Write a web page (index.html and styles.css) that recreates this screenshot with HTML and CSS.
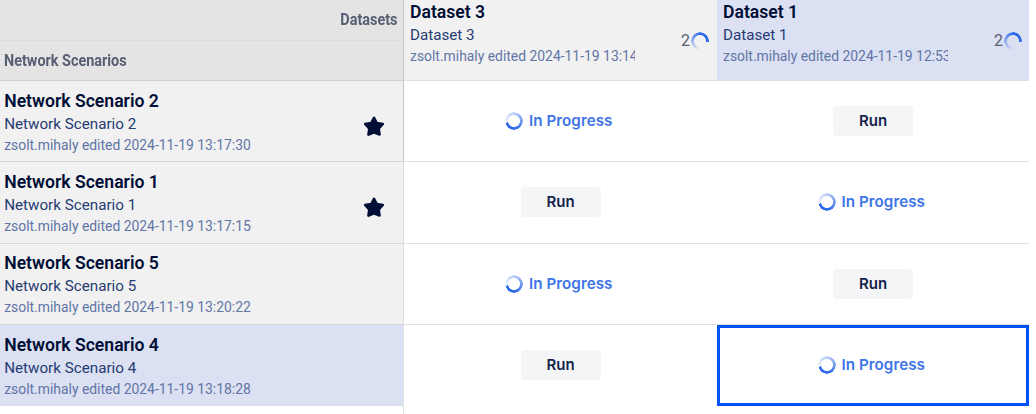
FILE: index.html
```html
<!DOCTYPE html>
<html lang="en">
<head>
<meta charset="utf-8">
<title>Network Scenarios</title>
<link rel="stylesheet" href="styles.css">
</head>
<body>
<main class="matrix">
  <div class="corner"><div class="corner-top"><span class="axis axis-right">Datasets</span></div><div class="corner-bottom"><span class="axis">Network Scenarios</span></div></div>
  <div class="dataset"><div class="info"><div class="name">Dataset 3</div><div class="desc">Dataset 3</div><div class="meta">zsolt.mihaly edited 2024-11-19 13:14</div></div><div class="count">2<i class="ring partial"></i></div></div>
  <div class="dataset selected"><div class="info"><div class="name">Dataset 1</div><div class="desc">Dataset 1</div><div class="meta">zsolt.mihaly edited 2024-11-19 12:53</div></div><div class="count">2<i class="ring partial"></i></div></div>

  <div class="scenario first"><div class="info"><div class="name">Network Scenario 2</div><div class="desc">Network Scenario 2</div><div class="meta">zsolt.mihaly edited 2024-11-19 13:17:30</div></div><svg class="star" viewBox="0 0 20 19"><path d="M10 1.6 12.4 6.4 18 7.2 14.2 11.3 15 16.8 10 14.8 5 16.8 5.8 11.3 2 7.2 7.6 6.4Z"/></svg></div>
  <div class="cell"><div class="progress"><i class="ring"></i>In Progress</div></div>
  <div class="cell"><button class="run">Run</button></div>

  <div class="scenario"><div class="info"><div class="name">Network Scenario 1</div><div class="desc">Network Scenario 1</div><div class="meta">zsolt.mihaly edited 2024-11-19 13:17:15</div></div><svg class="star" viewBox="0 0 20 19"><path d="M10 1.6 12.4 6.4 18 7.2 14.2 11.3 15 16.8 10 14.8 5 16.8 5.8 11.3 2 7.2 7.6 6.4Z"/></svg></div>
  <div class="cell odd"><button class="run">Run</button></div>
  <div class="cell odd"><div class="progress"><i class="ring"></i>In Progress</div></div>

  <div class="scenario third"><div class="info"><div class="name">Network Scenario 5</div><div class="desc">Network Scenario 5</div><div class="meta">zsolt.mihaly edited 2024-11-19 13:20:22</div></div></div>
  <div class="cell"><div class="progress"><i class="ring"></i>In Progress</div></div>
  <div class="cell"><button class="run">Run</button></div>

  <div class="scenario selected"><div class="info"><div class="name">Network Scenario 4</div><div class="desc">Network Scenario 4</div><div class="meta">zsolt.mihaly edited 2024-11-19 13:18:28</div></div></div>
  <div class="cell last"><button class="run">Run</button></div>
  <div class="cell last focused"><div class="progress"><i class="ring"></i>In Progress</div></div>

  <div class="tail"></div>
</main>
</body>
</html>
```
FILE: styles.css
```css
* { box-sizing: border-box; }
body { margin: 0; background: #fff; font-family: Roboto, sans-serif; overflow: hidden; }
.matrix { display: grid; width: 1029px; height: 414px; grid-template-columns: 404px 313px 312px; grid-template-rows: 81px 81px 82px 81px 81px 8px; }
.corner { background: #e4e4e4; border-right: 1px solid #c6c6c6; border-bottom: 1px solid #d2d2d2; }
.corner-top, .corner-bottom { display: flex; align-items: center; padding: 0 5.5px 1px 4.3px; height: 40px; }
.corner-top { height: 41px; border-bottom: 1px solid #dcdcdc; justify-content: flex-end; }
.axis { font-size: 16px; font-weight: 700; color: #565f72; transform: scaleX(.9); transform-origin: left; white-space: nowrap; }
.axis-right { transform-origin: right; }
.dataset { display: flex; align-items: center; background: #f1f1f1; border-bottom: 1px solid #e0e0e0; padding: 0 7px 0 6px; min-width: 0; }
.dataset .info { width: 225px; overflow: hidden; margin-top: -13px; }
.dataset .count { margin-left: auto; margin-top: 2px; }
.scenario { display: flex; background: #f1f1f1; border-right: 1px solid #e0e0e0; border-bottom: 1px solid #d6d6d6; padding: 8px 18px 0 4.2px; }
.scenario.first { border-right-color: #c6c6c6; }
.scenario.third { padding-top: 7px; }
.scenario.selected { border-bottom: 0; }
.selected { background: #dbe0f2; }
.info { white-space: nowrap; }
.name { font-size: 17.6px; line-height: 24px; font-weight: 600; color: #000e36; }
.desc { font-size: 15.2px; line-height: 22px; color: #263c72; }
.meta { font-size: 13.9px; line-height: 21px; color: #6175a6; }
.star { width: 22px; height: 21px; margin: 27px 0 0 auto; fill: #000e36; stroke: #000e36; stroke-width: 2.4; stroke-linejoin: round; }
.cell { display: flex; align-items: center; justify-content: center; border-bottom: 1px solid #e0e0e0; padding-bottom: 1px; }
.cell.odd { padding-bottom: 2px; }
.last { border-bottom: 0; padding-bottom: 2px; }
.focused { border: 3px solid #0052f5; }
.progress { display: flex; align-items: center; gap: 6px; padding-right: 3.5px; font-family: Inter, sans-serif; font-size: 15.2px; font-weight: 600; letter-spacing: .05px; color: #3d74e8; white-space: nowrap; }
.ring { display: block; flex: none; width: 18px; height: 18px; border-radius: 50%; background: conic-gradient(from 258deg, rgba(47,107,232,.08), rgba(47,107,232,.35) 110deg, rgba(47,107,232,.7) 200deg, #2f6be8 265deg); -webkit-mask: radial-gradient(circle, transparent 5.6px, #000 6.3px, #000 8.7px, transparent 9.1px); }
.partial { background: conic-gradient(from 180deg, rgba(47,107,232,0), rgba(47,107,232,.45) 90deg, #2f6be8 180deg, #2f6be8 275deg, transparent 278deg); }
.count { display: flex; align-items: center; gap: 1px; font-size: 16px; line-height: 20px; color: #575f70; }
.dataset:not(.selected) .count { margin-right: 1px; }
.run { border: 0; width: 80px; height: 30px; padding: 0 0 1px; border-radius: 4px; background: #f4f5f7; font-family: Inter, sans-serif; font-size: 15px; font-weight: 600; color: #14234a; }
.tail { border-right: 1px solid #e0e0e0; }
```
